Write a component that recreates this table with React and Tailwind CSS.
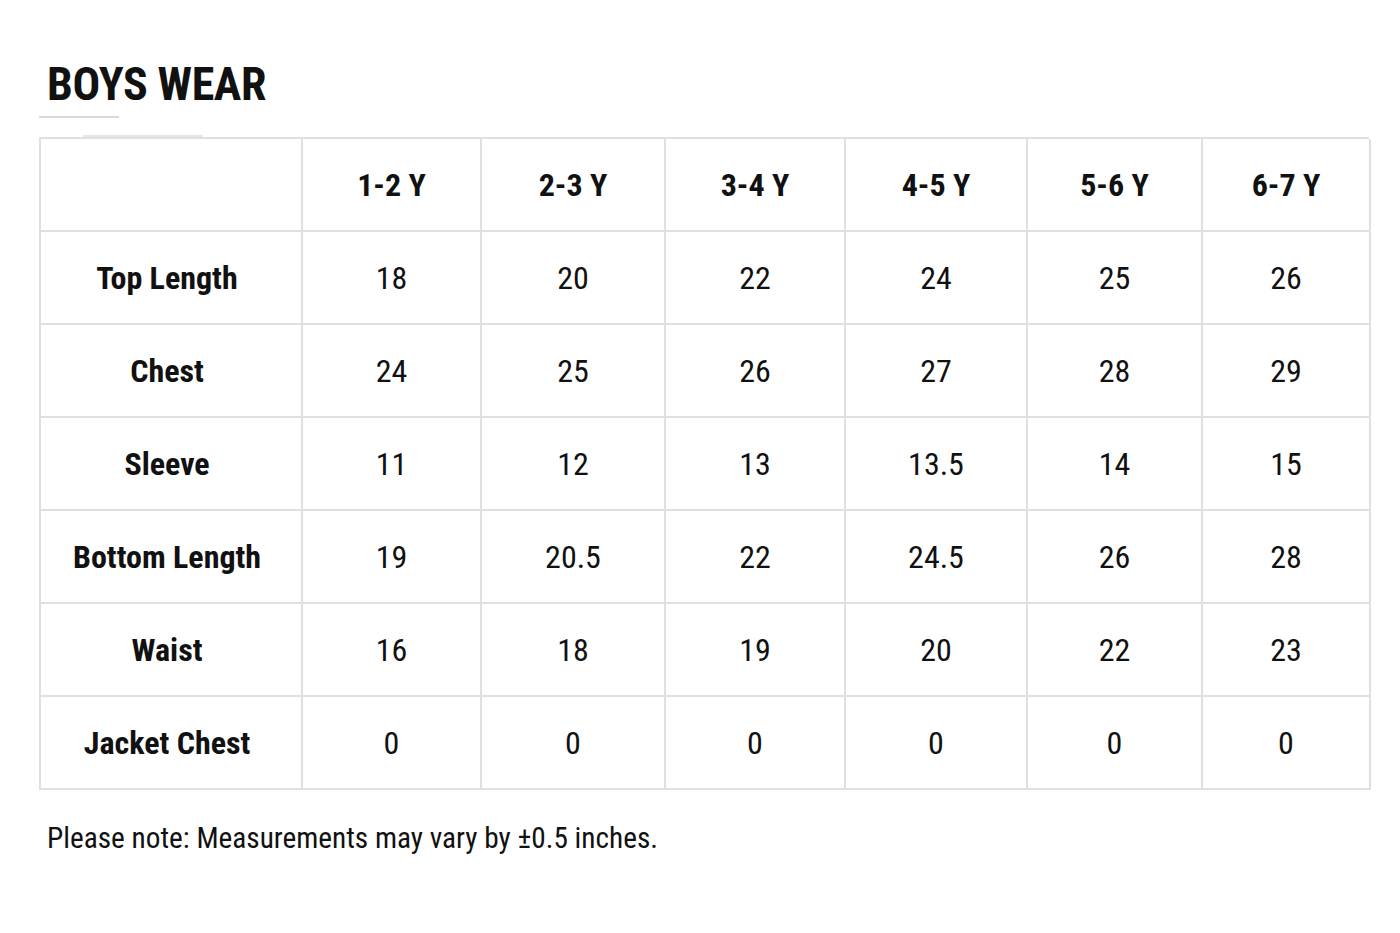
const headers = ["1-2 Y", "2-3 Y", "3-4 Y", "4-5 Y", "5-6 Y", "6-7 Y"];
const rows = [
  ["Top Length", "18", "20", "22", "24", "25", "26"],
  ["Chest", "24", "25", "26", "27", "28", "29"],
  ["Sleeve", "11", "12", "13", "13.5", "14", "15"],
  ["Bottom Length", "19", "20.5", "22", "24.5", "26", "28"],
  ["Waist", "16", "18", "19", "20", "22", "23"],
  ["Jacket Chest", "0", "0", "0", "0", "0", "0"],
];

function Cell({ children, bold, label }) {
  return (
    <div
      className={
        "h-[93px] flex items-center justify-center border-r-2 border-b-2 border-[#e0e0e0] text-[32px] leading-none text-[#111] " +
        (bold ? "font-bold " : "font-normal ") +
        (label ? "pr-[8px]" : "")
      }
    >
      {children}
    </div>
  );
}

export default function App() {
  return (
    <div className="min-h-[933px] bg-white px-[39px] pt-[61px] font-['Roboto_Condensed',_'Roboto',_sans-serif]">
      <h1 className="pl-[8px] text-[46px] leading-none font-bold tracking-[-0.4px] text-[#111]">BOYS WEAR</h1>
      <div className="mt-[9px] h-[2px] w-[80px] bg-[#d9d9d9]" />
      <div className="mt-[17px] ml-[44px] h-[2px] w-[120px] bg-[#e6e6e6]" />
      <div className="grid w-[1330px] grid-cols-[262px_179px_184px_180px_182px_175px_168px] border-t-2 border-l-2 border-[#e0e0e0]">
        <Cell label />
        {headers.map((h) => (
          <Cell key={h} bold>
            {h}
          </Cell>
        ))}
        {rows.map((r) =>
          r.map((v, i) => (
            <Cell key={r[0] + i} bold={i === 0} label={i === 0}>
              {v}
            </Cell>
          ))
        )}
      </div>
      <p className="mt-[34px] pl-[8px] text-[29.3px] leading-none text-[#111]">
        Please note: Measurements may vary by ±0.5 inches.
      </p>
    </div>
  );
}
